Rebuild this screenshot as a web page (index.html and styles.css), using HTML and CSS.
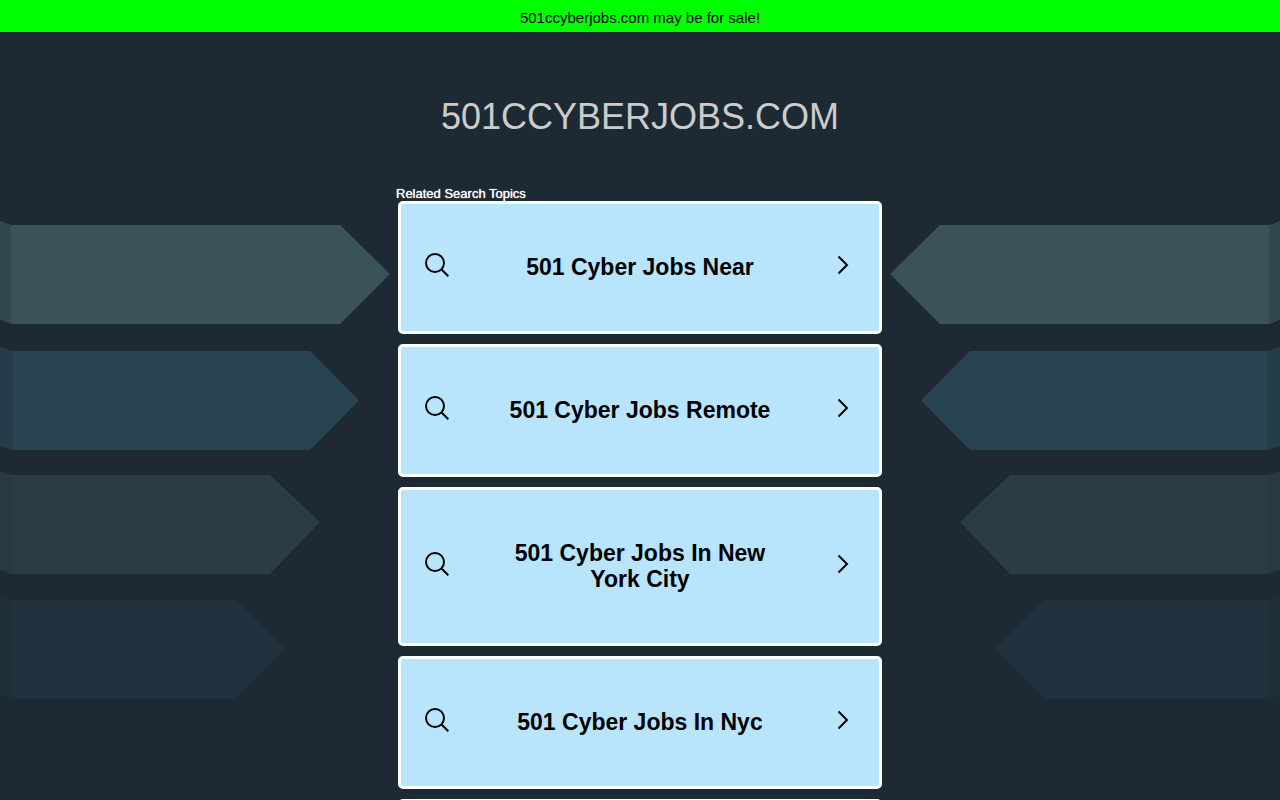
FILE: index.html
```html
<!DOCTYPE html>
<html lang="en">
<head>
    <meta charset="UTF-8">
    <meta name="viewport" content="width=device-width, initial-scale=1.0">
    <title>501ccyberjobs.com</title>
    <link rel="stylesheet" href="styles.css">
</head>
<body>

<!-- Icons shared by the topic cards -->
<svg class="sprite" aria-hidden="true">
    <symbol id="icon-search" viewBox="0 0 24 24">
        <circle cx="10" cy="10" r="9"/>
        <path d="M16.5 16.5L23.3 23.3"/>
    </symbol>
    <symbol id="icon-chevron" viewBox="0 0 24 24">
        <path d="M7.500 3.500L16 12L7.500 20.500"/>
    </symbol>
    <symbol id="ribbons" viewBox="0 0 396 500">
        <path fill="#33474e" d="M0 11L11 15V114L0 110Z"/>
        <path fill="#3b5357" d="M11 15H340L390 64L340 114H11Z"/>
        <path fill="none" stroke="#385055" d="M340.5 15V114"/>
        <path fill="#253c49" d="M0 137L13 141V240L0 236Z"/>
        <path fill="#284452" d="M13 141H310L359 190.500L310 240H13Z"/>
        <path fill="#283a41" d="M0 261L12 265V364L0 360Z"/>
        <path fill="#2b3d43" d="M12 265H270L320 312L270 364H12Z"/>
        <path fill="#1f2f3a" d="M0 386L12 390V489L0 485Z"/>
        <path fill="#20303c" d="M12 390H236L285 439L236 489H12Z"/>
    </symbol>
</svg>

<a class="sale-banner" href="#">501ccyberjobs.com may be for sale!</a>

<header>
    <h1>501ccyberjobs.com</h1>
</header>

<div class="content">
    <svg class="ribbons" aria-hidden="true"><use href="#ribbons"/></svg>

    <main class="topics">
        <h2>Related Search Topics</h2>
        <ul>
            <li>
                <a class="topic" href="#">
                    <svg class="icon" aria-hidden="true"><use href="#icon-search"/></svg>
                    <span class="topic-title">501 Cyber Jobs Near</span>
                    <svg class="icon" aria-hidden="true"><use href="#icon-chevron"/></svg>
                </a>
            </li>
            <li>
                <a class="topic" href="#">
                    <svg class="icon" aria-hidden="true"><use href="#icon-search"/></svg>
                    <span class="topic-title">501 Cyber Jobs Remote</span>
                    <svg class="icon" aria-hidden="true"><use href="#icon-chevron"/></svg>
                </a>
            </li>
            <li>
                <a class="topic" href="#">
                    <svg class="icon" aria-hidden="true"><use href="#icon-search"/></svg>
                    <span class="topic-title">501 Cyber Jobs In New York City</span>
                    <svg class="icon" aria-hidden="true"><use href="#icon-chevron"/></svg>
                </a>
            </li>
            <li>
                <a class="topic" href="#">
                    <svg class="icon" aria-hidden="true"><use href="#icon-search"/></svg>
                    <span class="topic-title">501 Cyber Jobs In Nyc</span>
                    <svg class="icon" aria-hidden="true"><use href="#icon-chevron"/></svg>
                </a>
            </li>
            <li>
                <a class="topic" href="#">
                    <svg class="icon" aria-hidden="true"><use href="#icon-search"/></svg>
                    <span class="topic-title">501 Cyber Jobs</span>
                    <svg class="icon" aria-hidden="true"><use href="#icon-chevron"/></svg>
                </a>
            </li>
        </ul>
    </main>

    <svg class="ribbons ribbons-right" aria-hidden="true"><use href="#ribbons"/></svg>
</div>

</body>
</html>
```
FILE: styles.css
```css
* {
    box-sizing: border-box;
}
body {
    margin: 0;
    background-color: #1e2a33;
    font-family: Arial, "Liberation Sans", sans-serif;
}
.sprite {
    display: none;
}

/* Top banner */
.sale-banner {
    display: block;
    padding: 9px 8px 6px;
    background-color: #00ff00;
    color: #000;
    font-size: 15px;
    line-height: 17px;
    text-align: center;
    text-decoration: none;
}

h1 {
    margin: 0;
    padding: 64px 16px 48px;
    color: #ccc;
    font-size: 36px;
    font-weight: normal;
    line-height: 42px;
    text-align: center;
    text-transform: uppercase;
}

/* Topic list between the two sets of ribbons */
.content {
    display: grid;
    grid-template-columns: minmax(0, 1fr) minmax(0, 488px) minmax(0, 1fr);
}
.ribbons {
    width: 396px;
    height: 500px;
    margin-top: 24px;
    justify-self: end;
}
.ribbons-right {
    justify-self: start;
    transform: scaleX(-1);
}
.topics h2 {
    margin: 0;
    color: #fff;
    font-size: 13px;
    font-weight: normal;
    line-height: 15px;
    text-shadow: 0 0 1px #fff;
}
.topics ul {
    display: flex;
    flex-direction: column;
    gap: 10px;
    margin: 0;
    padding: 0 2px;
    list-style: none;
}
.topic {
    display: flex;
    align-items: center;
    padding: 50px 24px 51px;
    border: 3px solid #fff;
    border-radius: 5px;
    background-color: #b8e5fc;
    color: #000;
    text-decoration: none;
}
.topic:hover {
    background-color: #d3effd;
}
.topic-title {
    flex: 1;
    padding: 0 40px;
    font-size: 23px;
    font-weight: bold;
    line-height: 26px;
    text-align: center;
}
.icon {
    flex: none;
    width: 24px;
    height: 24px;
    margin: -1px 0 3px;
    fill: none;
    stroke: #000;
    stroke-width: 2;
}
```
